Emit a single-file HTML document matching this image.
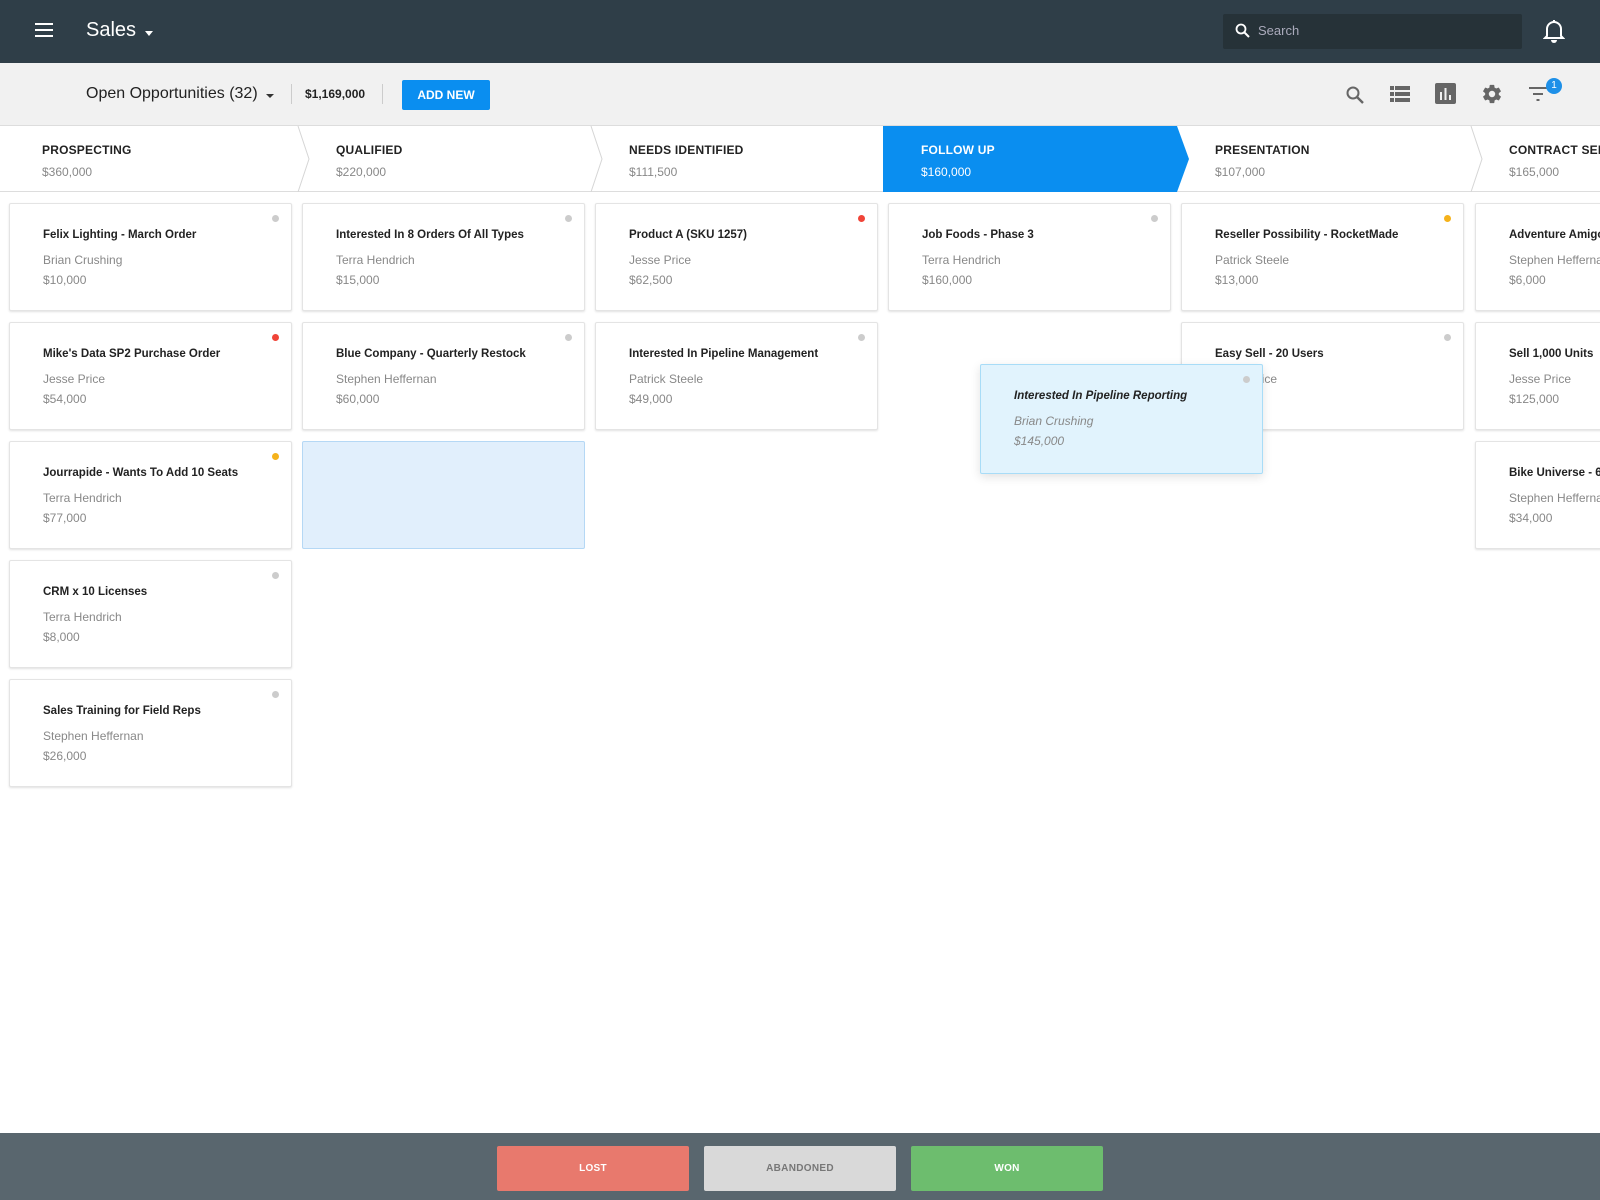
<!DOCTYPE html>
<html><head><meta charset="utf-8"><style>
*{box-sizing:border-box;margin:0;padding:0}
body{width:1600px;height:1200px;position:relative;overflow:hidden;background:#fff;font-family:"Liberation Sans",Arial,sans-serif;}
.abs{position:absolute}
#top{left:0;top:0;width:1600px;height:63px;background:#2f3e48}
#tool{left:0;top:63px;width:1600px;height:63px;background:#f1f1f1;border-bottom:1px solid #ddd}
#hdr{left:0;top:126px;width:1600px;height:66px;background:#fff;border-bottom:1px solid #ddd}
.st{position:absolute;top:17px}
.st b{display:block;font-size:12px;color:#222;font-weight:bold;letter-spacing:.2px}
.st span{display:block;font-size:12px;color:#888;margin-top:8px}
.card{position:absolute;width:283px;height:108px;background:#fff;border:1px solid #e4e4e4;box-shadow:0 1px 2px rgba(0,0,0,.12);border-radius:2px}
.card b{position:absolute;left:33px;top:25px;font-size:11.5px;color:#222;white-space:nowrap}
.card .n{position:absolute;left:33px;top:49px;font-size:12px;color:#888;white-space:nowrap}
.card .p{position:absolute;left:33px;top:69px;font-size:12px;color:#888}
.card i{position:absolute;right:12px;top:11px;width:7px;height:7px;border-radius:50%;background:#ccc}
#bot{left:0;top:1133px;width:1600px;height:67px;background:#59666e}
.btn{position:absolute;top:13px;width:192px;height:45px;border-radius:2px;font-size:10px;font-weight:bold;text-align:center;line-height:45px;letter-spacing:.3px}
</style></head><body>
<div id="top" class="abs">
  <div class="abs" style="left:35px;top:23px;width:18px;height:2px;background:#fff;box-shadow:0 6px 0 #fff,0 12px 0 #fff"></div>
  <div class="abs" style="left:86px;top:19px;font-size:20px;color:#fff">Sales</div>
  <div class="abs" style="left:145px;top:31px;border:4px solid transparent;border-top:5px solid #fff"></div>
  <div class="abs" style="left:1223px;top:14px;width:299px;height:35px;background:#263238;border-radius:2px"></div>
  <svg class="abs" style="left:1235px;top:23px" width="16" height="16" viewBox="0 0 16 16"><circle cx="6" cy="6" r="4.5" fill="none" stroke="#fff" stroke-width="1.8"/><path d="M9.5 9.5L14 14" stroke="#fff" stroke-width="2"/></svg>
  <div class="abs" style="left:1258px;top:23px;font-size:13px;color:#aab">Search</div>
  <svg class="abs" style="left:1543px;top:19px" width="22" height="24" viewBox="0 0 22 24"><path d="M4 17V10a7 7 0 0 1 14 0v7l2 2H2z" fill="none" stroke="#fff" stroke-width="2"/><path d="M8 21a3 3 0 0 0 6 0" fill="#fff"/><rect x="10" y="1" width="2" height="3" fill="#fff"/></svg>
</div>
<div id="tool" class="abs">
  <div class="abs" style="left:86px;top:22px;font-size:16px;color:#222">Open Opportunities (32)</div>
  <div class="abs" style="left:266px;top:31px;border:4px solid transparent;border-top:4px solid #333"></div>
  <div class="abs" style="left:291px;top:21px;width:1px;height:20px;background:#ccc"></div>
  <div class="abs" style="left:305px;top:24px;font-size:12px;font-weight:bold;color:#222">$1,169,000</div>
  <div class="abs" style="left:382px;top:21px;width:1px;height:20px;background:#ccc"></div>
  <div class="abs" style="left:402px;top:17px;width:88px;height:30px;background:#0a8ef0;border-radius:2px;color:#fff;font-size:12px;font-weight:bold;text-align:center;line-height:30px">ADD NEW</div>
  <svg class="abs" style="left:1345px;top:22px" width="20" height="20" viewBox="0 0 20 20"><circle cx="8" cy="8" r="5.5" fill="none" stroke="#666" stroke-width="2"/><path d="M12 12l6 6" stroke="#666" stroke-width="2.4"/></svg>
  <svg class="abs" style="left:1390px;top:23px" width="20" height="16" viewBox="0 0 20 16"><g fill="#666"><rect x="0" y="0" width="4" height="4"/><rect x="5" y="0" width="15" height="4"/><rect x="0" y="6" width="4" height="4"/><rect x="5" y="6" width="15" height="4"/><rect x="0" y="12" width="4" height="4"/><rect x="5" y="12" width="15" height="4"/></g></svg>
  <svg class="abs" style="left:1435px;top:20px" width="21" height="21" viewBox="0 0 21 21"><rect width="21" height="21" rx="2" fill="#666"/><rect x="5" y="9" width="2" height="8" fill="#f1f1f1"/><rect x="9.5" y="5" width="2" height="12" fill="#f1f1f1"/><rect x="14" y="12" width="2" height="5" fill="#f1f1f1"/></svg>
  <svg class="abs" style="left:1481px;top:20px" width="22" height="22" viewBox="0 0 24 24"><path fill="#666" d="M19.4 13c.04-.3.06-.6.06-1s-.02-.7-.06-1l2.1-1.65c.2-.15.24-.42.12-.64l-2-3.460c-.12-.22-.4-.3-.6-.22l-2.5 1c-.52-.4-1.080-.73-1.7-.98l-.37-2.650A.49.49 0 0 0 14 2h-4c-.25 0-.46.18-.5.42l-.37 2.65c-.6.25-1.17.6-1.7.98l-2.48-1c-.23-.1-.5 0-.6.22l-2 3.46c-.13.22-.07.5.12.64L4.570 11c-.04.3-.07.65-.07 1s.03.7.07 1l-2.1 1.65c-.2.15-.25.42-.13.64l2 3.46c.12.22.4.3.6.22l2.5-1c.52.4 1.08.73 1.7.98l.37 2.65c.04.24.25.42.5.42h4c.25 0 .46-.18.5-.42l.37-2.65c.6-.25 1.17-.6 1.7-.98l2.48 1c.23.1.5 0 .6-.22l2-3.46c.12-.22.07-.5-.12-.64zM12 15.5a3.5 3.5 0 1 1 0-7 3.5 3.5 0 0 1 0 7z"/></svg>
  <svg class="abs" style="left:1529px;top:24px" width="20" height="14" viewBox="0 0 20 14"><g fill="#666"><rect x="0" y="0" width="18" height="2"/><rect x="4" y="6" width="10" height="2"/><rect x="7.5" y="12" width="3" height="2"/></g></svg>
  <div class="abs" style="left:1546px;top:15px;width:16px;height:16px;border-radius:50%;background:#1e90e8;color:#fff;font-size:10px;text-align:center;line-height:16px">1</div>
</div>
<div id="hdr" class="abs">
  <svg class="abs" style="left:0;top:0" width="1600" height="66">
    <polygon points="883,0 1177,0 1189,33 1177,66 883,66" fill="#0a8ef0"/>
    <g fill="none" stroke="#d6d6d6" stroke-width="1">
      <polyline points="298,0 309,33 298,66"/>
      <polyline points="591,0 602,33 591,66"/>
      <polyline points="1471,0 1482,33 1471,66"/>
    </g>
  </svg>
  <div class="st" style="left:42px"><b>PROSPECTING</b><span>$360,000</span></div>
  <div class="st" style="left:336px"><b>QUALIFIED</b><span>$220,000</span></div>
  <div class="st" style="left:629px"><b>NEEDS IDENTIFIED</b><span>$111,500</span></div>
  <div class="st" style="left:921px"><b style="color:#fff">FOLLOW UP</b><span style="color:#fff">$160,000</span></div>
  <div class="st" style="left:1215px"><b>PRESENTATION</b><span>$107,000</span></div>
  <div class="st" style="left:1509px"><b style="white-space:nowrap">CONTRACT SENT</b><span>$165,000</span></div>
</div>

<div class="card" style="left:9px;top:203px"><b>Felix Lighting - March Order</b><div class="n">Brian Crushing</div><div class="p">$10,000</div><i></i></div>
<div class="card" style="left:9px;top:322px"><b>Mike's Data SP2 Purchase Order</b><div class="n">Jesse Price</div><div class="p">$54,000</div><i style="background:#f04438"></i></div>
<div class="card" style="left:9px;top:441px"><b>Jourrapide - Wants To Add 10 Seats</b><div class="n">Terra Hendrich</div><div class="p">$77,000</div><i style="background:#f5b21b"></i></div>
<div class="card" style="left:9px;top:560px"><b>CRM x 10 Licenses</b><div class="n">Terra Hendrich</div><div class="p">$8,000</div><i></i></div>
<div class="card" style="left:9px;top:679px"><b>Sales Training for Field Reps</b><div class="n">Stephen Heffernan</div><div class="p">$26,000</div><i></i></div>

<div class="card" style="left:302px;top:203px"><b>Interested In 8 Orders Of All Types</b><div class="n">Terra Hendrich</div><div class="p">$15,000</div><i></i></div>
<div class="card" style="left:302px;top:322px"><b>Blue Company - Quarterly Restock</b><div class="n">Stephen Heffernan</div><div class="p">$60,000</div><i></i></div>
<div class="card" style="left:302px;top:441px;background:#e1effc;border-color:#b5d8f5;box-shadow:none"></div>

<div class="card" style="left:595px;top:203px"><b>Product A (SKU 1257)</b><div class="n">Jesse Price</div><div class="p">$62,500</div><i style="background:#f04438"></i></div>
<div class="card" style="left:595px;top:322px"><b>Interested In Pipeline Management</b><div class="n">Patrick Steele</div><div class="p">$49,000</div><i></i></div>

<div class="card" style="left:888px;top:203px"><b>Job Foods - Phase 3</b><div class="n">Terra Hendrich</div><div class="p">$160,000</div><i></i></div>

<div class="card" style="left:1181px;top:203px"><b>Reseller Possibility - RocketMade</b><div class="n">Patrick Steele</div><div class="p">$13,000</div><i style="background:#f5b21b"></i></div>
<div class="card" style="left:1181px;top:322px"><b>Easy Sell - 20 Users</b><div class="n">Jesse Price</div><div class="p">$18,000</div><i></i></div>

<div class="card" style="left:1475px;top:203px"><b>Adventure Amigos</b><div class="n">Stephen Heffernan</div><div class="p">$6,000</div><i></i></div>
<div class="card" style="left:1475px;top:322px"><b>Sell 1,000 Units</b><div class="n">Jesse Price</div><div class="p">$125,000</div><i></i></div>
<div class="card" style="left:1475px;top:441px"><b>Bike Universe - 6 Units</b><div class="n">Stephen Heffernan</div><div class="p">$34,000</div><i></i></div>

<div class="card" style="left:980px;top:364px;height:110px;background:#e1f3fd;border-color:#a8dcf7;box-shadow:0 3px 10px rgba(0,0,0,.12);font-style:italic"><b>Interested In Pipeline Reporting</b><div class="n">Brian Crushing</div><div class="p">$145,000</div><i></i></div>

<div id="bot" class="abs">
  <div class="btn" style="left:497px;background:#e8796d;color:#fff">LOST</div>
  <div class="btn" style="left:704px;background:#d9d9d9;color:#777">ABANDONED</div>
  <div class="btn" style="left:911px;background:#6dbd6e;color:#fff">WON</div>
</div>
</body></html>
